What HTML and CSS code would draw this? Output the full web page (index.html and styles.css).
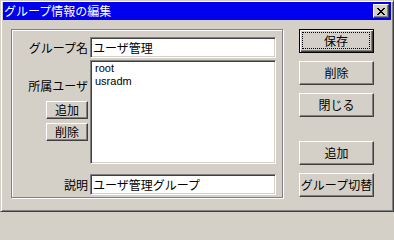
FILE: index.html
```html
<!DOCTYPE html>
<html lang="ja">
<head>
<meta charset="utf-8">
<title>グループ情報の編集</title>
<link rel="stylesheet" href="styles.css">
</head>
<body>
<div class="window">
  <div class="titlebar">
    <span class="title">グループ情報の編集</span>
    <span class="close">
      <svg width="8" height="7" viewBox="0 0 8 7" shape-rendering="crispEdges">
        <path fill="#000" d="M0 0h2v1H0zM6 0h2v1H6zM1 1h2v1H1zM5 1h2v1H5zM2 2h4v1H2zM3 3h2v1H3zM2 4h4v1H2zM1 5h2v1H1zM5 5h2v1H5zM0 6h2v1H0zM6 6h2v1H6z"/>
      </svg>
    </span>
  </div>
  <div class="client">
    <div class="group">
      <div class="row row-name">
        <div class="label">グループ名</div>
        <div class="field">ユーザ管理</div>
      </div>
      <div class="row row-members">
        <div class="side">
          <div class="label side-label">所属ユーザ</div>
          <div class="btn small">追加</div>
          <div class="btn small small-2">削除</div>
        </div>
        <div class="listbox">
          <div class="item">root</div>
          <div class="item">usradm</div>
        </div>
      </div>
      <div class="row row-desc">
        <div class="label">説明</div>
        <div class="field">ユーザ管理グループ</div>
      </div>
    </div>
    <div class="actions">
      <div class="btn wide default"><span class="focus">保存</span></div>
      <div class="btn wide">削除</div>
      <div class="btn wide">閉じる</div>
      <div class="btn wide spaced">追加</div>
      <div class="btn wide">グループ切替</div>
    </div>
  </div>
</div>
</body>
</html>
```
FILE: styles.css
```css
* { box-sizing: border-box; }
html, body { margin: 0; padding: 0; }
body {
  background: #d4d0c8;
  font-family: "Noto Sans CJK JP", "Liberation Sans", sans-serif;
  font-size: 12px;
  color: #000;
}
.window {
  width: 394px;
  height: 212px;
  background: #d4d0c8;
  border: 1px solid;
  border-color: #d4d0c8 #404040 #404040 #d4d0c8;
  box-shadow: inset 1px 1px 0 #fff, inset -1px -1px 0 #808080;
  padding: 1px 2px 2px 2px;
  display: flex;
  flex-direction: column;
}
.titlebar {
  height: 18px;
  background: #0000ee;
  display: flex;
  align-items: center;
  justify-content: space-between;
  padding-left: 1px;
}
.title {
  color: #fff;
  line-height: 18px;
  white-space: nowrap;
}
.close {
  width: 16px;
  height: 14px;
  margin-right: 2px;
  background: #d4d0c8;
  border: 1px solid;
  border-color: #fff #404040 #404040 #fff;
  box-shadow: inset -1px -1px 0 #808080;
  display: flex;
  align-items: center;
  justify-content: center;
}
.close svg { display: block; }
.client {
  display: flex;
  align-items: flex-start;
  padding: 9px 0 0 8px;
}
.group {
  width: 272px;
  height: 169px;
  border: 1px solid #808080;
  box-shadow: 1px 1px 0 #fff, inset 1px 1px 0 #fff;
  display: flex;
  flex-direction: column;
}
.row {
  display: flex;
  align-items: center;
}
.row-name { margin-top: 7px; }
.row-members { margin-top: 2px; align-items: flex-start; }
.row-desc { margin-top: 10px; }
.label {
  width: 76px;
  text-align: right;
  white-space: nowrap;
  line-height: 21px;
}
.field {
  width: 186px;
  height: 21px;
  margin-left: 2px;
  background: #fff;
  border: 1px solid;
  border-color: #808080 #fff #fff #808080;
  box-shadow: inset 1px 1px 0 #404040, inset -1px -1px 0 #d4d0c8;
  padding: 0 2px;
  line-height: 19px;
  white-space: nowrap;
  overflow: hidden;
}
.side {
  width: 76px;
  display: flex;
  flex-direction: column;
  align-items: flex-end;
}
.side-label {
  margin-top: 19px;
  line-height: 14px;
}
.listbox {
  width: 186px;
  height: 104px;
  margin-left: 2px;
  background: #fff;
  border: 1px solid;
  border-color: #808080 #fff #fff #808080;
  box-shadow: inset 1px 1px 0 #404040, inset -1px -1px 0 #d4d0c8;
  padding: 1px 4px;
}
.item {
  font-family: "Liberation Sans", sans-serif;
  font-size: 11px;
  line-height: 13px;
}
.btn {
  display: flex;
  align-items: center;
  justify-content: center;
  background: #d4d0c8;
  border: 1px solid;
  border-color: #fff #404040 #404040 #fff;
  box-shadow: inset -1px -1px 0 #808080;
  white-space: nowrap;
  line-height: 1;
}
.small {
  width: 42px;
  height: 18px;
  margin-top: 8px;
}
.small-2 { margin-top: 4px; }
.actions {
  margin-left: 16px;
  display: flex;
  flex-direction: column;
  gap: 8px;
}
.wide {
  width: 75px;
  height: 24px;
}
.spaced { margin-top: 16px; }
.default {
  border-color: #000;
  box-shadow: inset 1px 1px 0 #fff, inset -1px -1px 0 #404040, inset -2px -2px 0 #808080;
  padding: 2px 3px 3px 2px;
}
.focus {
  flex: 1;
  align-self: stretch;
  border: 1px dotted #000;
  display: flex;
  align-items: center;
  justify-content: center;
}
```
